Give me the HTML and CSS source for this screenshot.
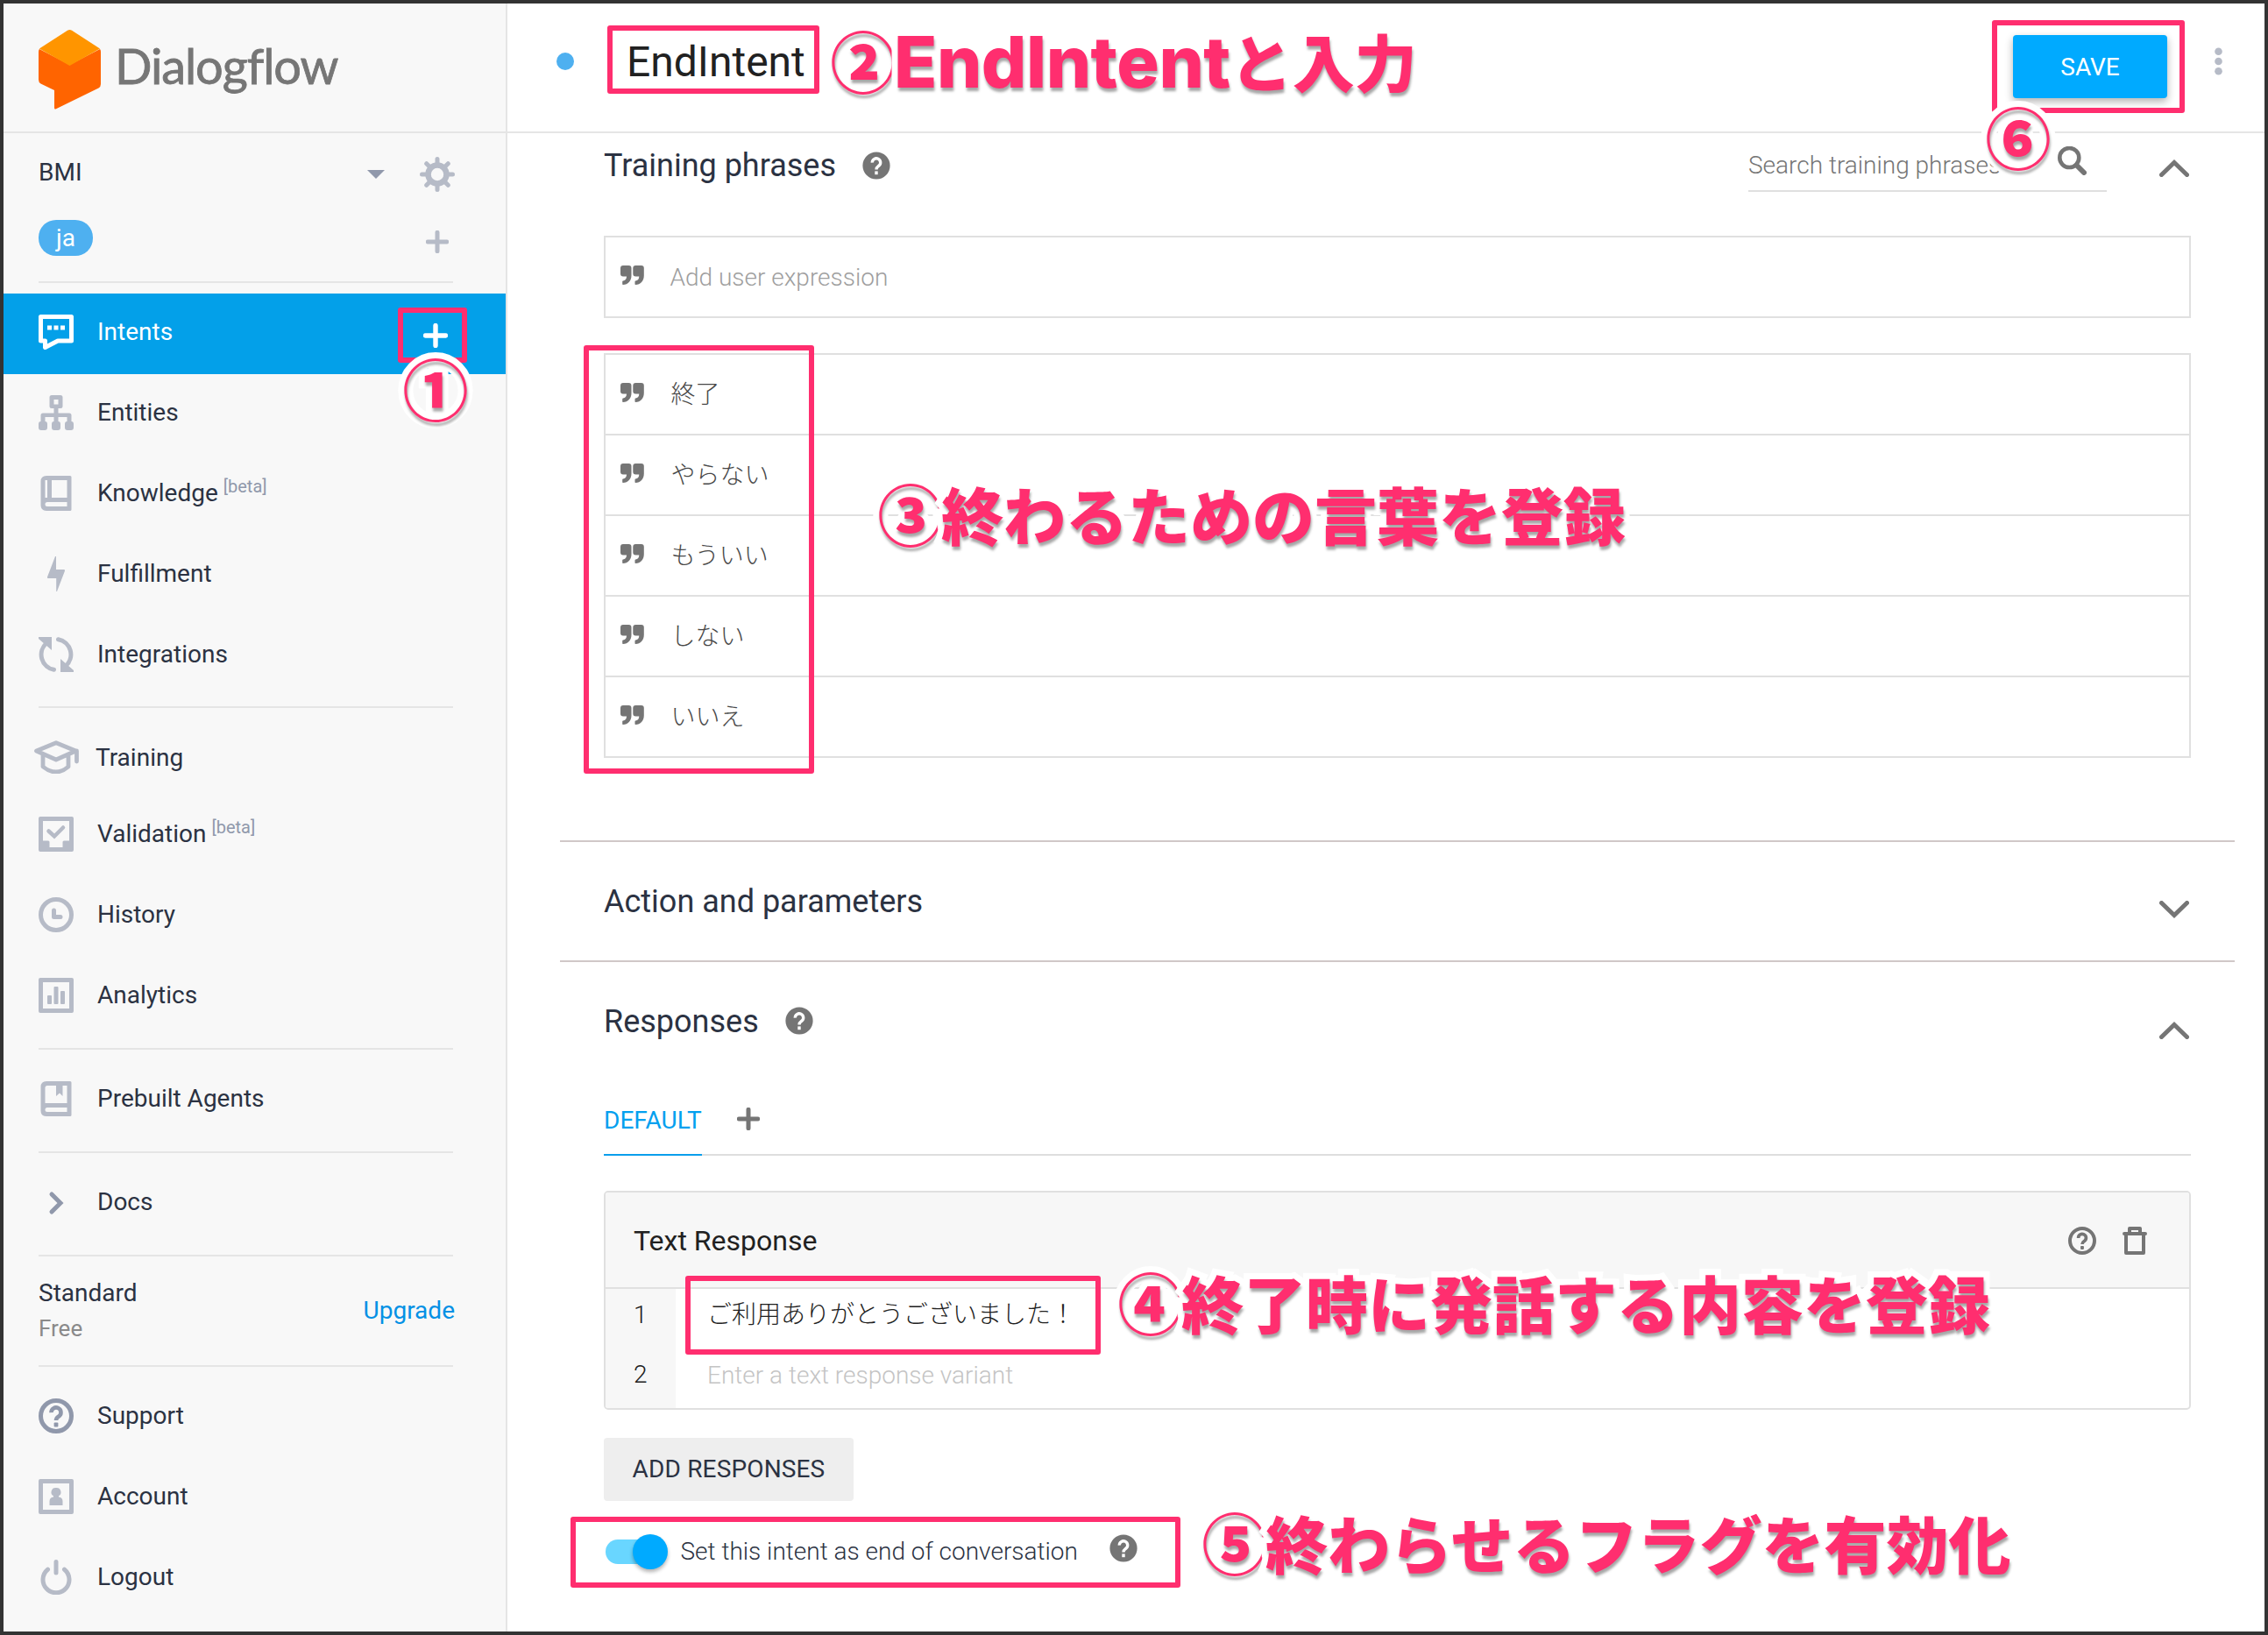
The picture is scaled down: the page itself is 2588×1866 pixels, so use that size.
FILE: index.html
```html
<!DOCTYPE html>
<html lang="ja">
<head>
<meta charset="utf-8">
<title>Dialogflow</title>
<link rel="stylesheet" href="styles.css">
</head>
<body>
<svg class="defs" width="0" height="0">
  <symbol id="question" viewBox="0 0 40 40"><path d="M14.5 16.2a5.5 5.5 0 1 1 8.6 4.3c-2.2 1.5-3.1 2-3.1 4.5" fill="none" stroke="currentColor" stroke-width="4.6"/><rect x="17.6" y="27.6" width="4.8" height="4.8" rx="1" fill="currentColor"/></symbol>
  <symbol id="help-solid" viewBox="0 0 32 32"><circle cx="16" cy="16" r="15.6" fill="#757575"/><path d="M11.3 12.6a4.7 4.7 0 1 1 7.6 3.6c-2 1.5-2.9 2-2.9 4.4" fill="none" stroke="#fff" stroke-width="3.4"/><rect x="14.3" y="22.4" width="3.4" height="3.8" fill="#fff"/></symbol>
  <symbol id="quote" viewBox="0 0 27 22"><path id="q" d="M3 0h6.500a3 3 0 0 1 3 3v8.500c0 6-4 10.500-9.500 10.500-.6 0-.8-.3-.8-.8v-2.700c0-.5.3-.8.8-.9 2.500-.4 4-2.300 4-5.100H3a3 3 0 0 1-3-3V3a3 3 0 0 1 3-3z" fill="#757575"/><use href="#q" x="14.300"/></symbol>
  <symbol id="chevron" viewBox="0 0 34 20"><path d="M2.500 17.500 17 3.500l14.500 14" fill="none" stroke="#757575" stroke-width="5" stroke-linecap="round"/></symbol>
  <symbol id="plus" viewBox="0 0 28 28"><path d="M14 2.500v23M2.500 14h23" fill="none" stroke="currentColor" stroke-width="5.400" stroke-linecap="round"/></symbol>
</svg>

<div class="page">
<div class="window">
  <aside class="sidebar">
    <div class="brand">
      <svg width="71" height="91" viewBox="0 0 71 91"><path d="M1 22 35.500 40 70 22q1 1 1 3v37q0 3-2.500 4.500L20 90.300q-2 1-2-1.300V69L2.500 61.500Q0 60 0 57V25q0-2 1-3z" fill="#ff6400"/><path d="M33 .8q2.500-1.400 5 0L70 21.500 35.500 41 .9 21.500z" fill="#ff9500"/></svg>
      <span class="brand-name">Dialogflow</span>
    </div>
    <div class="agent">
      <span class="agent-name">BMI</span>
      <svg class="caret" width="20" height="10" viewBox="0 0 20 10"><path d="M0 0h20L10 10z" fill="#9098ab"/></svg>
      <svg width="40" height="40" viewBox="0 0 40 40"><g fill="none" stroke="#b6bbc7"><circle cx="20" cy="20" r="10.300" stroke-width="6.800"/><path d="M20 2.500v35M2.500 20h35M7.700 7.700l24.600 24.600M32.300 7.700 7.700 32.300" stroke-width="5" stroke-linecap="round"/></g><circle cx="20" cy="20" r="7.200" fill="#f8f8f8"/></svg>
    </div>
    <div class="languages">
      <span class="language">ja</span>
      <svg class="muted" width="26" height="26"><use href="#plus"/></svg>
    </div>
    <hr class="rule first">
    <nav>
      <a class="item active"><svg width="40" height="40" viewBox="0 0 40 40"><path d="M2.500 2.500h35V30H22L7.500 37.500V30h-5z" fill="none" stroke="#fff" stroke-width="5" stroke-linejoin="round"/><path d="M10 12.500h5v5h-5zM17.500 12.500h5v5h-5zM25 12.500h5v5h-5z" fill="#fff"/></svg><span>Intents</span><svg class="add" width="28" height="28"><use href="#plus"/></svg></a>
      <a class="item"><svg width="40" height="40" viewBox="0 0 40 40"><path fill-rule="evenodd" fill="#b6bbc7" d="M15 0h10q2.500 0 2.500 2.500v10q0 2.500-2.500 2.500h-2.500v5.500H35q2.500 0 2.500 2.500v7q2.500 0 2.500 3v4q0 3-3 3h-4q-3 0-3-3v-4q0-3 2.500-3v-5h-10v5q2.500 0 2.500 3v4q0 3-3 3h-4q-3 0-3-3v-4q0-3 2.500-3v-5h-10v5q2.500 0 2.500 3v4q0 3-3 3H3q-3 0-3-3v-4q0-3 2.500-3v-7q0-2.500 2.500-2.500h12.500V15H15q-2.500 0-2.500-2.500v-10Q12.500 0 15 0zm2.500 5v5.500h5V5z"/></svg><span>Entities</span></a>
      <a class="item"><svg width="40" height="40" viewBox="0 0 40 40"><path fill-rule="evenodd" fill="#b6bbc7" d="M9 0h27q1.500 0 1.500 1.500v37q0 1.500-1.500 1.500H9q-6.500 0-6.500-6.500v-27Q2.500 0 9 0zM7.500 5v20H10V5zM15 5v20h17.500V5zM10 30q-2.500 0-2.500 2.500T10 35h22.500v-5z"/></svg><span>Knowledge <sup>[beta]</sup></span></a>
      <a class="item"><svg width="40" height="40" viewBox="0 0 40 40"><path d="M20 0v15h9q1.500 0 1 1.500L21 40h-.8V25H11q-1.500 0-1-1.500L19 0z" fill="#b6bbc7"/></svg><span>Fulfillment</span></a>
      <a class="item"><svg width="40" height="40" viewBox="0 0 40 40"><path d="M9 7a17.500 17.500 0 0 0 8.500 30.300M22.500 2.700A17.500 17.500 0 0 1 31 33" fill="none" stroke="#b6bbc7" stroke-width="5" stroke-linecap="round"/><path d="M0 0h15v15L0 2zM40 40H25V25l15 13z" fill="#b6bbc7"/></svg><span>Integrations</span></a>
      <hr class="rule short">
      <a class="item training"><svg width="54" height="38" viewBox="0 0 54 38"><path d="M4.500 12 27 2.700 49.500 12 27 22zM12 17v13q15 12 29 0V17M50.500 12v12" fill="none" stroke="#b6bbc7" stroke-width="4.800" stroke-linejoin="round" stroke-linecap="round"/></svg><span>Training</span></a>
      <a class="item"><svg width="40" height="40" viewBox="0 0 40 40"><path fill-rule="evenodd" fill="#b6bbc7" d="M2 0h36q2 0 2 2v36q0 2-2 2H2q-2 0-2-2V2q0-2 2-2zm3 5v22.500h6q1.500 0 1.500 1.500v6h15v-6q0-1.500 1.500-1.500h6V5z"/><path d="m11.500 16.500 6.500 6 10-10" fill="none" stroke="#b6bbc7" stroke-width="4.500" stroke-linecap="round"/></svg><span>Validation <sup>[beta]</sup></span></a>
      <a class="item"><svg width="40" height="40" viewBox="0 0 40 40"><g fill="none" stroke="#b6bbc7" stroke-width="5"><circle cx="20" cy="20" r="17.500"/><path d="M17.500 15v7.500H25" stroke-linecap="round" stroke-linejoin="round"/></g></svg><span>History</span></a>
      <a class="item"><svg width="40" height="40" viewBox="0 0 40 40"><path fill-rule="evenodd" fill="#b6bbc7" d="M2 0h36q2 0 2 2v36q0 2-2 2H2q-2 0-2-2V2q0-2 2-2zm3 5v30h30V5z"/><g fill="#b6bbc7"><rect x="10" y="20" width="5" height="10" rx="1"/><rect x="17.500" y="10" width="5" height="20" rx="1"/><rect x="25" y="15" width="5" height="15" rx="1"/></g></svg><span>Analytics</span></a>
      <hr class="rule">
      <a class="item"><svg width="40" height="40" viewBox="0 0 40 40"><path fill-rule="evenodd" fill="#b6bbc7" d="M9 0h27q1.500 0 1.500 1.500v37q0 1.500-1.500 1.500H9q-6.500 0-6.500-6.500v-27Q2.500 0 9 0zm1 5q-2.500 0-2.500 2.500V25h25V5h-5v12L24 13.500 20 17V5zM10 30q-2.500 0-2.500 2.500T10 35h22.500v-5z"/></svg><span>Prebuilt Agents</span></a>
      <hr class="rule">
      <a class="item"><svg width="40" height="40" viewBox="0 0 40 40"><path d="m15 11 10 10-10 10" fill="none" stroke="#9098ab" stroke-width="5" stroke-linecap="round"/></svg><span>Docs</span></a>
      <hr class="rule">
      <div class="plan"><div><div class="plan-name">Standard</div><div class="plan-price">Free</div></div><a class="upgrade">Upgrade</a></div>
      <hr class="rule">
      <a class="item help"><svg width="40" height="40" viewBox="0 0 40 40"><circle cx="20" cy="20" r="17.500" fill="none" stroke="currentColor" stroke-width="5"/><use href="#question"/></svg><span>Support</span></a>
      <a class="item"><svg width="40" height="40" viewBox="0 0 40 40"><path fill-rule="evenodd" fill="#b6bbc7" d="M2 0h36q2 0 2 2v36q0 2-2 2H2q-2 0-2-2V2q0-2 2-2zm3 5v30h30V5z"/><path d="M20 10a5 5 0 0 1 3 9.300v1.200c3 .5 4.500 2 4.500 5V30h-15v-4.500c0-3 1.500-4.500 4.500-5v-1.200A5 5 0 0 1 20 10z" fill="#b6bbc7"/></svg><span>Account</span></a>
      <a class="item"><svg width="40" height="40" viewBox="0 0 40 40"><path d="M10.500 11.200a15 15 0 1 0 19 0M20 2.500V15" fill="none" stroke="#b6bbc7" stroke-width="5" stroke-linecap="round"/></svg><span>Logout</span></a>
    </nav>
  </aside>

  <main class="main">
    <header class="topbar">
      <span class="dot"></span>
      <h1>EndIntent</h1>
      <button class="save">SAVE</button>
      <svg class="kebab" width="9" height="32" viewBox="0 0 9 32" fill="#b6bbc7"><circle cx="4.500" cy="4.700" r="4.300"/><circle cx="4.500" cy="16" r="4.300"/><circle cx="4.500" cy="27.300" r="4.300"/></svg>
    </header>

    <section class="section">
      <div class="section-head training-head">
        <h2>Training phrases</h2>
        <svg class="tip" width="32" height="32"><use href="#help-solid"/></svg>
        <div class="search"><span>Search training phrases</span><svg width="33" height="33" viewBox="0 0 33 33"><g fill="none" stroke="#757575"><circle cx="13.300" cy="13" r="11" stroke-width="4.600"/><path d="m21.500 21.500 8.500 8.500" stroke-width="6" stroke-linecap="round"/></g></svg></div>
        <svg class="chevron" width="34" height="20"><use href="#chevron"/></svg>
      </div>
      <div class="expression"><svg width="27" height="22"><use href="#quote"/></svg><span>Add user expression</span></div>
      <ul class="phrases">
        <li><svg width="27" height="22"><use href="#quote"/></svg><span>終了</span></li>
        <li><svg width="27" height="22"><use href="#quote"/></svg><span>やらない</span></li>
        <li><svg width="27" height="22"><use href="#quote"/></svg><span>もういい</span></li>
        <li><svg width="27" height="22"><use href="#quote"/></svg><span>しない</span></li>
        <li><svg width="27" height="22"><use href="#quote"/></svg><span>いいえ</span></li>
      </ul>
    </section>
    <hr class="divider">
    <section class="section">
      <div class="section-head">
        <h2>Action and parameters</h2>
        <svg class="chevron down" width="34" height="20"><use href="#chevron"/></svg>
      </div>
    </section>
    <hr class="divider">
    <section class="section">
      <div class="section-head responses-head">
        <h2>Responses</h2>
        <svg class="tip" width="32" height="32"><use href="#help-solid"/></svg>
        <svg class="chevron" width="34" height="20"><use href="#chevron"/></svg>
      </div>
      <div class="tabs"><span class="tab">DEFAULT</span><svg class="tab-add" width="26" height="26"><use href="#plus"/></svg></div>
      <div class="card">
        <div class="card-head">
          <span>Text Response</span>
          <svg class="card-help" width="32" height="32" viewBox="0 0 40 40"><circle cx="20" cy="20" r="17.500" fill="none" stroke="currentColor" stroke-width="5"/><use href="#question"/></svg>
          <svg width="28" height="32" viewBox="0 0 28 32"><path d="M2 8h24M8 7V2h12v5M4 8v22h20V8" fill="none" stroke="#757575" stroke-width="4" stroke-linejoin="round" stroke-linecap="round"/></svg>
        </div>
        <div class="variant"><span class="num">1</span><span class="value">ご利用ありがとうございました！</span></div>
        <div class="variant"><span class="num">2</span><span class="value empty">Enter a text response variant</span></div>
      </div>
      <button class="add-responses">ADD RESPONSES</button>
      <div class="end-flag">
        <span class="switch"><span class="thumb"></span></span>
        <span class="flag-label">Set this intent as end of conversation</span>
        <svg class="flag-tip" width="32" height="32"><use href="#help-solid"/></svg>
      </div>
    </section>
  </main>
</div>

<div class="mark mark-1"></div>
<div class="mark mark-2"></div>
<div class="mark mark-3"></div>
<div class="mark mark-4"></div>
<div class="mark mark-5"></div>
<div class="mark mark-6"></div>
<div class="note note-1"><span class="step">①</span></div>
<div class="note note-2"><span class="step">②</span><span class="latin">EndIntent</span>と入力</div>
<div class="note note-3"><span class="step">③</span>終わるための言葉を登録</div>
<div class="note note-4"><span class="step">④</span>終了時に発話する内容を登録</div>
<div class="note note-5"><span class="step">⑤</span>終わらせるフラグを有効化</div>
<div class="note note-6"><span class="step">⑥</span></div>
</div>
</body>
</html>
```
FILE: styles.css
```css
* { box-sizing: border-box; }
body { margin: 0; font-family: Roboto, "Noto Sans CJK JP", sans-serif; font-size: 28px; color: #2b3242; }
svg { display: block; flex: none; }
h1, h2, ul, hr { margin: 0; padding: 0; }
h1, h2 { font-weight: 400; }
button { border: 0; font: inherit; padding: 0; }
.defs { position: absolute; }

.page { position: relative; width: 2588px; height: 1866px; overflow: hidden; }
.window { display: flex; width: 2588px; height: 1866px; border: 4px solid #333; background: #fff; overflow: hidden; }

/* Sidebar */
.sidebar { width: 575px; flex: none; background: #f8f8f8; border-right: 2px solid #e5e5e5; }
.brand { display: flex; height: 148px; padding: 30px 0 0 40px; border-bottom: 2px solid #e5e5e5; }
.brand-name { margin-left: 16px; font-family: Lato, sans-serif; font-size: 56px; line-height: 81px; letter-spacing: -1.1px; color: #767676; -webkit-text-stroke: 0.8px #767676; }
.agent { display: flex; align-items: center; height: 93px; padding: 0 58px 0 40px; }
.agent-name { flex: 1; padding-bottom: 4px; }
.caret { margin-right: 40px; }
.languages { display: flex; justify-content: space-between; padding: 6px 65px 0 40px; height: 76px; }
.languages svg { margin-top: 12px; }
.language { width: 62px; height: 41px; line-height: 42px; border-radius: 20px; background: #4eb0f0; color: #fff; text-align: center; }
.muted { color: #b6bbc7; }
.rule { height: 2px; border: 0; margin: 12px 60px 12px 40px; background: #e5e5e5; }
.rule.first { margin-top: 0; }
.rule.short { margin-top: 11px; }
.item { display: flex; align-items: center; height: 92px; padding: 0 0 4px 40px; }
.item span { margin-left: 27px; padding-bottom: 2px; }
.item sup { margin-left: -1px; font-size: 20px; line-height: 0; vertical-align: 10px; color: #9098ab; }
.item.active { background: #03a0e9; color: #fff; }
.add { margin: 8px 66px 0 auto; }
.item.training { height: 88px; padding: 0 0 0 33px; }
.item.training span { margin-left: 18px; padding: 0; }
.item.help svg { color: #9098ab; }
.plan { display: flex; justify-content: space-between; align-items: center; height: 100px; padding: 0 58px 0 40px; line-height: 40px; }
.plan-name { margin-top: -1px; }
.plan-price { font-size: 26px; color: #8a8a8a; }
.upgrade { margin-top: -1px; color: #0491e5; }

/* Main column */
.main { flex: 1; min-width: 0; }
.topbar { display: flex; align-items: center; height: 148px; padding: 0 48px 14px 56px; border-bottom: 2px solid #e5e5e5; }
.dot { width: 20px; height: 20px; border-radius: 50%; background: #4eb0f0; }
h1 { flex: 1; margin-left: 60px; font-size: 48px; color: #212121; }
.save { width: 176px; height: 72px; margin-top: 12px; border-radius: 4px; background: #00aaff; color: #fff; box-shadow: 0 4px 10px rgba(0, 0, 0, .3); }
.kebab { margin-left: 54px; }

.section { padding: 0 84px 0 110px; }
.section-head { display: flex; align-items: center; height: 135px; }
.training-head { height: 74px; }
h2 { font-size: 36px; }
.tip { margin: -1px 0 0 30px; }
.chevron { margin: 20px 2px 0 auto; }
.chevron.down { transform: scaleY(-1); margin-top: 18px; }
.training-head .chevron { margin: 5px 2px 0 60px; }
.search { display: flex; justify-content: space-between; align-items: center; width: 409px; height: 60px; margin-left: auto; padding-right: 23px; border-bottom: 2px solid #e0e0e0; color: #757575; font-weight: 300; }
.search svg { margin-bottom: 9px; }
.expression, .phrases li { display: flex; align-items: center; gap: 30px; padding-left: 16.5px; }
.expression { height: 94px; margin-top: 43px; border: 2px solid #e0e0e0; color: #9e9e9e; font-weight: 300; }
.expression svg, .phrases svg { margin-bottom: 4px; }
.phrases { margin: 40px 0 94px; border: 2px solid #e0e0e0; list-style: none; color: #484848; font-weight: 300; }
.phrases li { height: 92px; border-bottom: 2px solid #e0e0e0; }
.phrases li:last-child { height: 90px; border-bottom: 0; }
.phrases span { padding: 0 0 4px 1px; }
.divider { height: 2px; border: 0; margin: 0 34px 0 60px; background: #d0c8c8; }

.tabs { display: flex; align-items: center; height: 86px; border-bottom: 2px solid #dedede; }
.tab { height: 86px; padding-top: 6px; line-height: 80px; margin-bottom: -2px; border-bottom: 2px solid #0a9eec; color: #03a0ef; }
.tab-add { margin: 3px 0 0 40.5px; color: #757575; }
.card { margin-top: 40px; border: 2px solid #e0e0e0; border-radius: 5px; overflow: hidden; }
.card-head { display: flex; align-items: center; height: 110px; padding: 2px 48px 0 32px; border-bottom: 2px solid #e0e0e0; background: #f7f7f7; font-size: 32px; color: #212121; }
.card-head span { flex: 1; }
.card-help { margin-right: 30px; color: #757575; }
.variant { display: flex; height: 68px; line-height: 60px; font-weight: 300; color: #212121; }
.num { width: 80px; padding-left: 32px; background: #f7f7f7; }
.value { padding-left: 36px; }
.value.empty { padding-top: 1px; color: #c4c4c4; }
.add-responses { display: block; width: 285px; height: 72px; margin-top: 32px; padding-bottom: 2px; border-radius: 4px; background: #eee; color: #2b3242; letter-spacing: .15px; }
.end-flag { display: flex; align-items: center; margin-top: 38px; height: 40px; font-weight: 300; }
.flag-label { padding-bottom: 2px; }
.switch { display: flex; align-items: center; justify-content: flex-end; width: 68px; height: 28px; margin: 0 17.5px 0 2px; border-radius: 14px; background: #69d6ff; }
.thumb { flex: none; width: 40px; height: 40px; margin-right: -3px; border-radius: 50%; background: #00aaff; box-shadow: 0 3px 4px rgba(0, 0, 0, .3); }
.flag-tip { margin: -8px 0 0 36.5px; }

/* Annotations drawn over the window */
.mark { position: absolute; border: 6px solid #ff2e6f; border-radius: 3px; }
.mark-1 { left: 454px; top: 351px; width: 79px; height: 63px; }
.mark-2 { left: 693px; top: 29px; width: 242px; height: 78px; }
.mark-3 { left: 665.5px; top: 393.5px; width: 263px; height: 489px; }
.mark-4 { left: 781.5px; top: 1456px; width: 474px; height: 90px; }
.mark-5 { left: 651px; top: 1731px; width: 696px; height: 81px; }
.mark-6 { left: 2273px; top: 23px; width: 220px; height: 106px; }
.note { position: absolute; display: flex; height: 100px; line-height: 100px; white-space: nowrap; font-family: "Noto Sans CJK JP", sans-serif; font-weight: 900; font-size: 71px; color: #ff2e6f; -webkit-text-stroke: 14px #fff; paint-order: stroke fill; stroke-linejoin: round; text-shadow: 1px 4px 3px rgba(0, 0, 0, .35); }
.step { width: 71px; margin-left: -1.5px; margin-right: 1.5px; font-size: 75px; }
.latin { margin-top: 3px; font-family: Inter, sans-serif; font-weight: 800; font-size: 81px; letter-spacing: -0.5px; }
.note-1 { left: 461px; top: 392px; }
.note-2 { left: 949px; top: 18px; }
.note-3 { left: 1003px; top: 535px; }
.note-4 { left: 1277px; top: 1435px; }
.note-5 { left: 1373px; top: 1709px; }
.note-6 { left: 2267px; top: 105px; }
```
